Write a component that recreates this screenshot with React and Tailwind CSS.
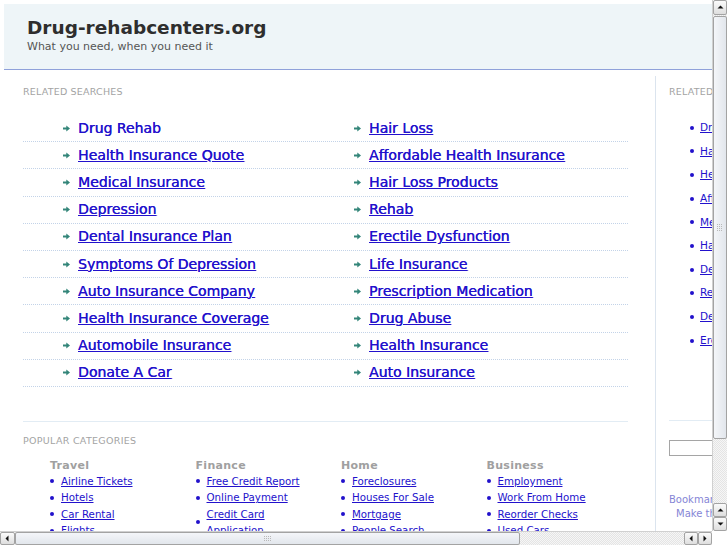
import React from "react";

const leftLinks = [
  "Drug Rehab",
  "Health Insurance Quote",
  "Medical Insurance",
  "Depression",
  "Dental Insurance Plan",
  "Symptoms Of Depression",
  "Auto Insurance Company",
  "Health Insurance Coverage",
  "Automobile Insurance",
  "Donate A Car",
];
const rightLinks = [
  "Hair Loss",
  "Affordable Health Insurance",
  "Hair Loss Products",
  "Rehab",
  "Erectile Dysfunction",
  "Life Insurance",
  "Prescription Medication",
  "Drug Abuse",
  "Health Insurance",
  "Auto Insurance",
];
const sideLinks = [
  "Drug Rehab",
  "Hair Loss",
  "Health Insurance Quote",
  "Affordable Health Insurance",
  "Medical Insurance",
  "Hair Loss Products",
  "Depression",
  "Rehab",
  "Dental Insurance Plan",
  "Erectile Dysfunction",
];
const categories = [
  { title: "Travel", items: ["Airline Tickets", "Hotels", "Car Rental", "Flights"] },
  { title: "Finance", items: ["Free Credit Report", "Online Payment", "Credit Card Application", "Insurance"] },
  { title: "Home", items: ["Foreclosures", "Houses For Sale", "Mortgage", "People Search"] },
  { title: "Business", items: ["Employment", "Work From Home", "Reorder Checks", "Used Cars"] },
];

function Arrow() {
  return (
    <svg width="7" height="7" viewBox="0 0 7 7" className="shrink-0">
      <path d="M0 2.4h3.3V0.4L7 3.5 3.3 6.6V4.6H0z" fill="#338579" />
    </svg>
  );
}

function Dot() {
  return <span className="w-[4px] h-[4px] rounded-full bg-[#2211cc] shrink-0" />;
}

function Grip({ vertical }) {
  const dots = [];
  const cols = vertical ? 3 : 4;
  const rows = vertical ? 4 : 3;
  for (let r = 0; r < rows; r++)
    for (let c = 0; c < cols; c++)
      dots.push(<rect key={r + "-" + c} x={c * 2} y={r * 2} width="1" height="1" fill="#b8b8b8" />);
  return (
    <svg width={cols * 2} height={rows * 2} viewBox={`0 0 ${cols * 2} ${rows * 2}`}>
      {dots}
    </svg>
  );
}

function Tri({ dir }) {
  const d = {
    up: "M0.5 4.5L3.5 1.5L6.5 4.5z",
    down: "M0.5 1.5L3.5 4.5L6.5 1.5z",
    left: "M4.5 0.5L1.5 3.5L4.5 6.5z",
    right: "M1.5 0.5L4.5 3.5L1.5 6.5z",
  }[dir];
  return (
    <svg width="7" height="7" viewBox="0 0 7 7">
      <path d={d} fill="#111" />
    </svg>
  );
}

function Btn({ dir, className = "" }) {
  return (
    <div
      className={
        "flex items-center justify-center border border-[#a3a3a3] rounded-[2px] bg-gradient-to-b from-[#fbfbfb] to-[#dedede] " +
        className
      }
    >
      <Tri dir={dir} />
    </div>
  );
}

const track =
  "bg-[#efefef] bg-[image:repeating-conic-gradient(#e4e4e4_0%_25%,#f6f6f6_0%_50%)] bg-[length:2px_2px]";

export default function App() {
  return (
    <div
      className="w-[727px] h-[545px] flex flex-col overflow-hidden bg-white"
      style={{ fontFamily: '"DejaVu Sans", Verdana, sans-serif' }}
    >
      <div className="flex h-[531px]">
        {/* page content */}
        <div className="flex-1 overflow-hidden">
          <div className="w-[900px]">
            <div className="mt-[4px] ml-[4px] h-[66px] bg-[#eef5f8] border-b border-[#8fa1da] pl-[23px] pt-[13px]">
              <div className="text-[18.5px] leading-[22px] font-bold text-[#2e2e2e]">Drug-rehabcenters.org</div>
              <div className="text-[11px] leading-[13px] text-[#555] mt-[1px]">What you need, when you need it</div>
            </div>

            <div className="flex pt-[6px]">
              {/* main column */}
              <div className="w-[655px] pl-[23px] pr-[27px]">
                <div className="pt-[10px] text-[9.5px] leading-[11px] text-[#a3a3a3] tracking-[0.2px]">RELATED SEARCHES</div>
                <div className="mt-[18px]">
                  {leftLinks.map((l, i) => (
                    <div
                      key={l}
                      className="flex items-center h-[27.2px] border-b border-dotted border-[#c3d3e8] text-[14px] leading-[17px] [text-shadow:0.35px_0_0_#2211cc]"
                    >
                      <div className="w-[331px] pl-[40px] flex items-center gap-[8px]">
                        <Arrow />
                        <a className={"text-[#2211cc] " + (i === 0 ? "no-underline" : "underline")}>{l}</a>
                      </div>
                      <div className="flex-1 flex items-center gap-[8px]">
                        <Arrow />
                        <a className="text-[#2211cc] underline">{rightLinks[i]}</a>
                      </div>
                    </div>
                  ))}
                </div>
                <div className="mt-[34px] border-t border-[#e2ecf4]" />
                <div className="pt-[13px] text-[9.5px] leading-[11px] text-[#a3a3a3] tracking-[0.3px]">POPULAR CATEGORIES</div>
                <div className="pl-[27px] mt-[13px] grid grid-cols-[145.5px_145.5px_145.5px_145.5px]">
                  {categories.map((c) => (
                    <div key={c.title}>
                      <div className="text-[11px] leading-[14px] font-bold text-[#a0a0a0] tracking-[0.3px]">{c.title}</div>
                      <div>
                        {c.items.map((it) => (
                          <div key={it} className="w-[120px] flex items-center gap-[7px] text-[10.25px] leading-[16.5px]">
                            <Dot />
                            <a className="text-[#2211cc] underline">{it}</a>
                          </div>
                        ))}
                      </div>
                    </div>
                  ))}
                </div>
              </div>

              {/* sidebar */}
              <div className="w-[200px] border-l border-[#dbe4ee] pl-[13px] h-[470px]">
                <div className="pt-[10px] text-[9.5px] leading-[11px] text-[#a3a3a3] tracking-[0.2px]">RELATED SEARCHES</div>
                <div className="mt-[19px] pl-[21px]">
                  {sideLinks.map((l) => (
                    <div key={l} className="h-[23.65px] flex items-center gap-[6px] text-[10.5px]">
                      <Dot />
                      <a className="text-[#2211cc] underline whitespace-nowrap">{l}</a>
                    </div>
                  ))}
                </div>
                <div className="mt-[68px] border-t border-[#e2ecf4]" />
                <div className="mt-[19px] w-[150px] h-[16px] border border-[#a5a5a5] bg-white" />
                <div className="mt-[37px] text-[10px] leading-[14px] text-[#8585d6]">Bookmark this page</div>
                <div className="pl-[7px] text-[10px] leading-[13px] text-[#8585d6]">Make this your homepage</div>
              </div>
            </div>
          </div>
        </div>

        {/* vertical scrollbar */}
        <div className={"w-[15px] flex flex-col border-l border-[#d0d0d0] " + track}>
          <Btn dir="up" className="h-[15px] shrink-0" />
          <div className="h-[423px] shrink-0 mt-[1px] border border-[#a3a3a3] rounded-[2px] bg-gradient-to-r from-[#f4f6f9] to-[#e2e6ec] flex items-center justify-center">
            <Grip vertical />
          </div>
          <div className="flex-1" />
          <Btn dir="up" className="h-[14px] shrink-0" />
          <Btn dir="down" className="h-[14px] shrink-0" />
        </div>
      </div>

      {/* horizontal scrollbar */}
      <div className="flex h-[14px]">
        <div className={"w-[712px] flex border-t border-[#d0d0d0] " + track}>
          <Btn dir="left" className="w-[15px] shrink-0" />
          <div className="w-[505px] shrink-0 border border-[#a3a3a3] rounded-[2px] bg-gradient-to-b from-[#f4f6f9] to-[#e2e6ec] flex items-center justify-center">
            <Grip />
          </div>
          <div className="flex-1" />
          <Btn dir="left" className="w-[14px] shrink-0" />
          <Btn dir="right" className="w-[14px] shrink-0" />
        </div>
        <div className="flex-1 bg-white" />
      </div>
    </div>
  );
}
